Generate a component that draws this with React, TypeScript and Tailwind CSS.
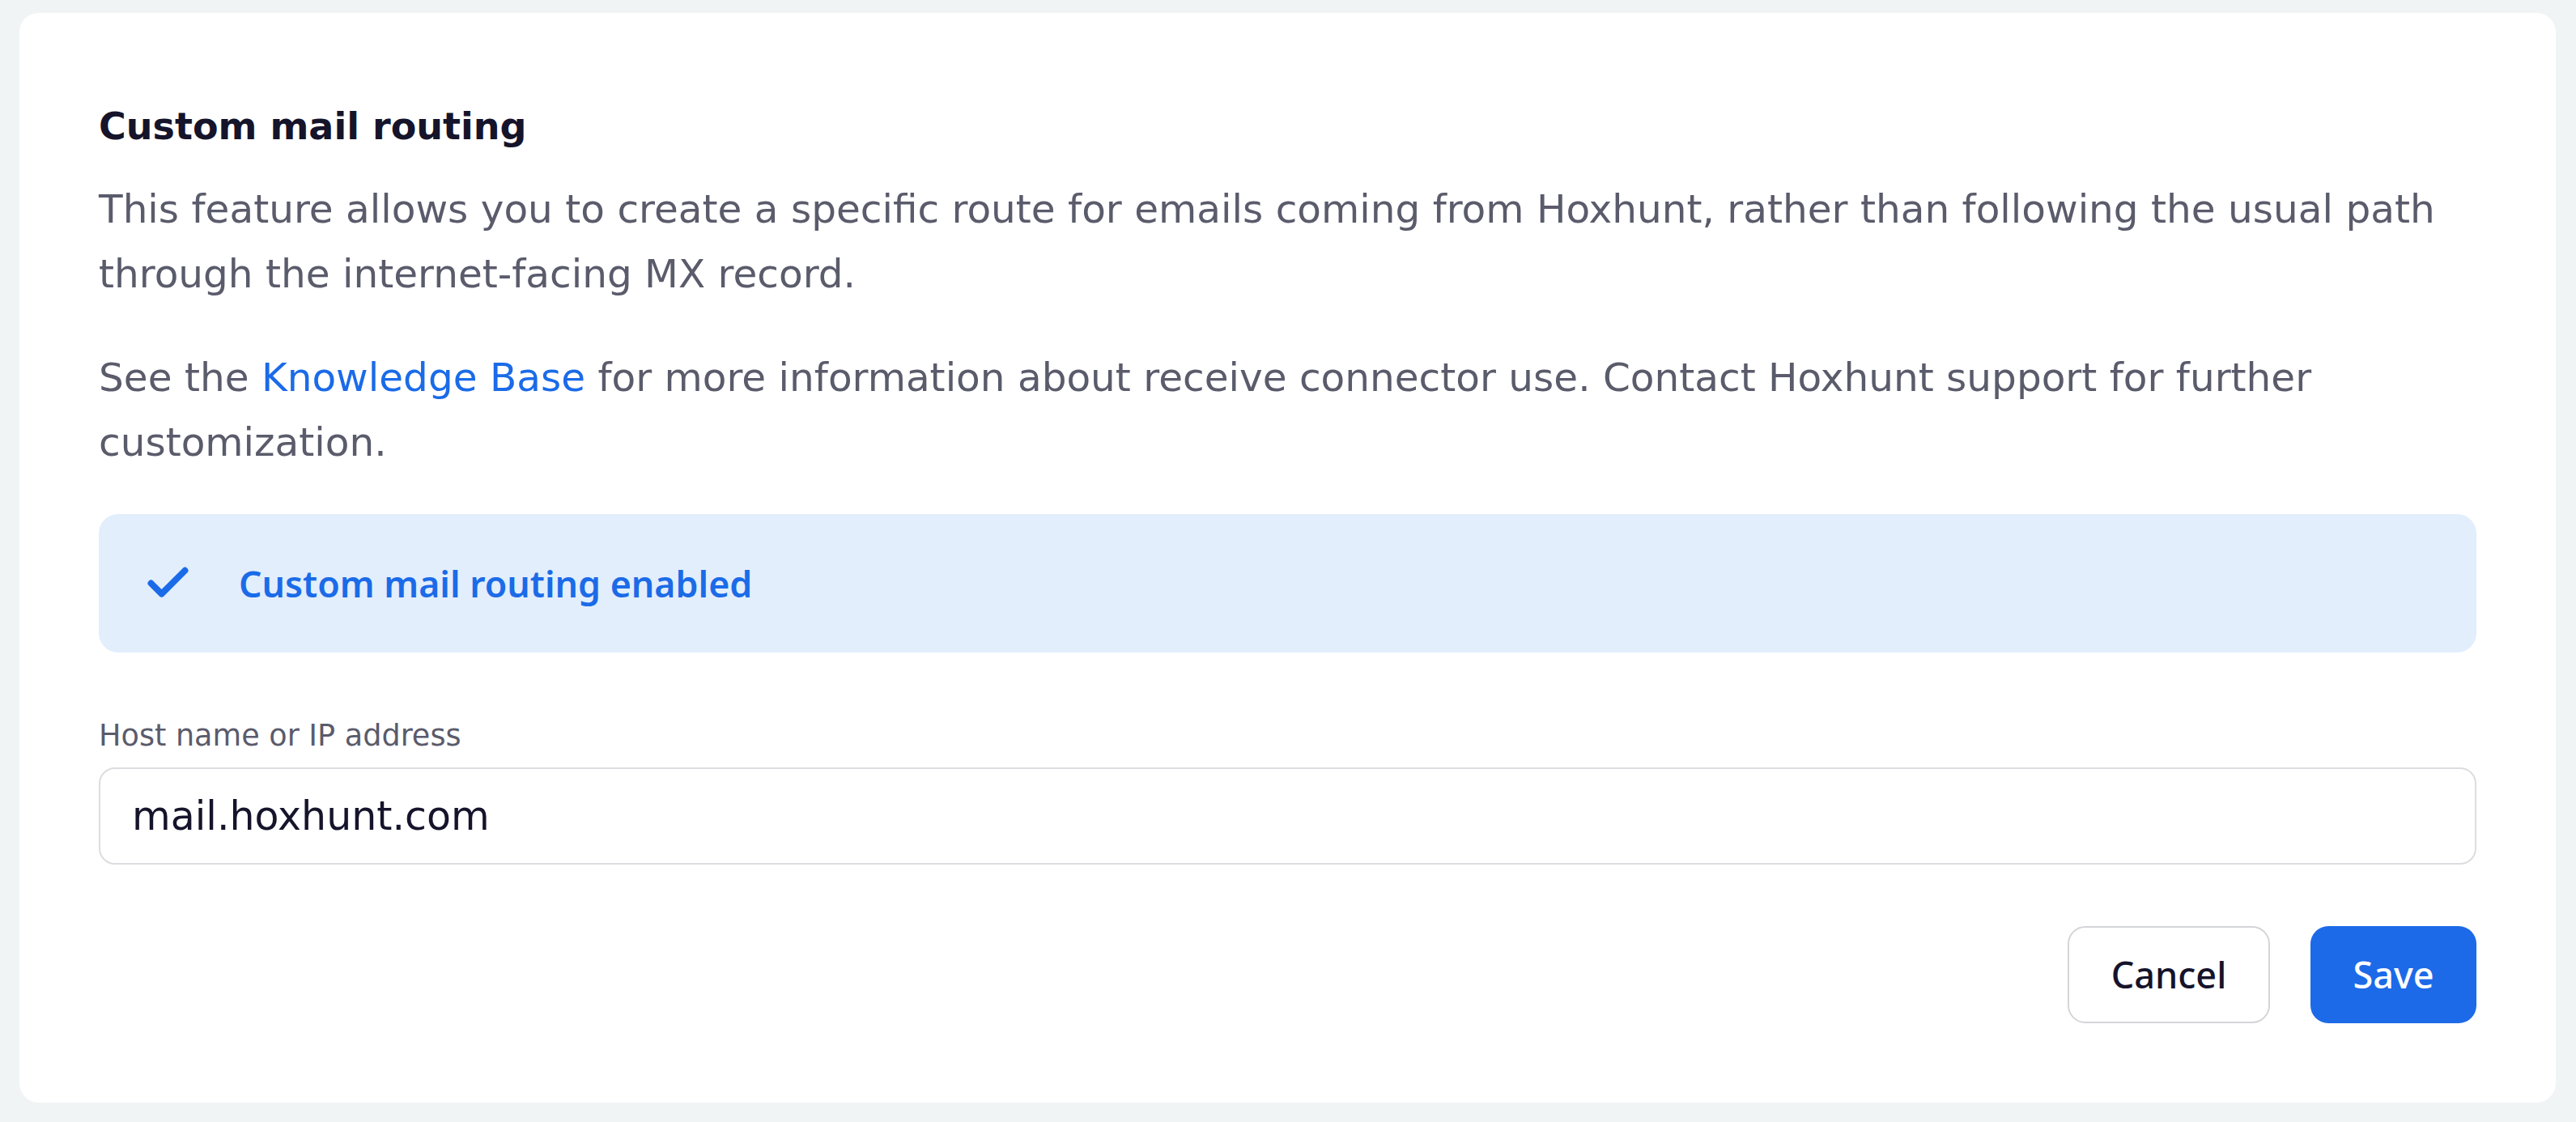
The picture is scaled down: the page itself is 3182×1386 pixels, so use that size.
import { Check } from "lucide-react";

export default function App() {
  return (
    <div className="min-h-screen bg-[#f1f4f5] pt-4 pl-6 pr-[25px] pb-6 font-['DejaVu_Sans',sans-serif]">
      <div className="bg-white rounded-[24px] pt-[112px] pb-[98px] px-[98px]">
        {/* Header */}
        <h2 className="text-[46px] leading-[56px] font-bold text-[#15142b]">
          Custom mail routing
        </h2>
        <p className="mt-[34px] text-[48.5px] leading-[80px] text-[#5a5b6b]">
          This feature allows you to create a specific route for emails coming
          from Hoxhunt, rather than following the usual path through the
          internet-facing MX record.
        </p>
        <p className="mt-12 text-[48.5px] leading-[80px] text-[#5a5b6b]">
          See the <a href="#" className="text-[#1b6be8]">Knowledge Base</a> for
          more information about receive connector use. Contact Hoxhunt support
          for further customization.
        </p>

        {/* Status */}
        <div className="mt-[49px] h-[171px] rounded-[24px] bg-[#e2eefc] flex items-center pl-[54px]">
          <Check className="w-[63px] h-[63px] text-[#1b6be8]" strokeWidth={3} />
          <span className="ml-[56px] font-['Noto_Sans',sans-serif] font-semibold text-[44.7px] text-[#1b6be8]">
            Custom mail routing enabled
          </span>
        </div>

        {/* Host field */}
        <label className="block mt-[81px] text-[36.6px] leading-[44px] text-[#5a5b6b]">
          Host name or IP address
        </label>
        <input
          readOnly
          value="mail.hoxhunt.com"
          className="mt-[17px] block w-full h-[120px] rounded-[20px] border-2 border-[#dcdde0] pl-[39px] text-[49px] text-[#15142b] outline-none font-['DejaVu_Sans',sans-serif]"
        />

        {/* Actions */}
        <div className="mt-[76px] flex justify-end gap-[50px] font-['Noto_Sans',sans-serif] font-medium">
          <button className="w-[250px] h-[120px] rounded-[22px] border-2 border-[#d4d5d8] bg-white text-[45px] text-[#15142b]">
            Cancel
          </button>
          <button className="w-[205px] h-[120px] rounded-[22px] bg-[#1d6ae8] text-[45px] text-white">
            Save
          </button>
        </div>
      </div>
    </div>
  );
}
